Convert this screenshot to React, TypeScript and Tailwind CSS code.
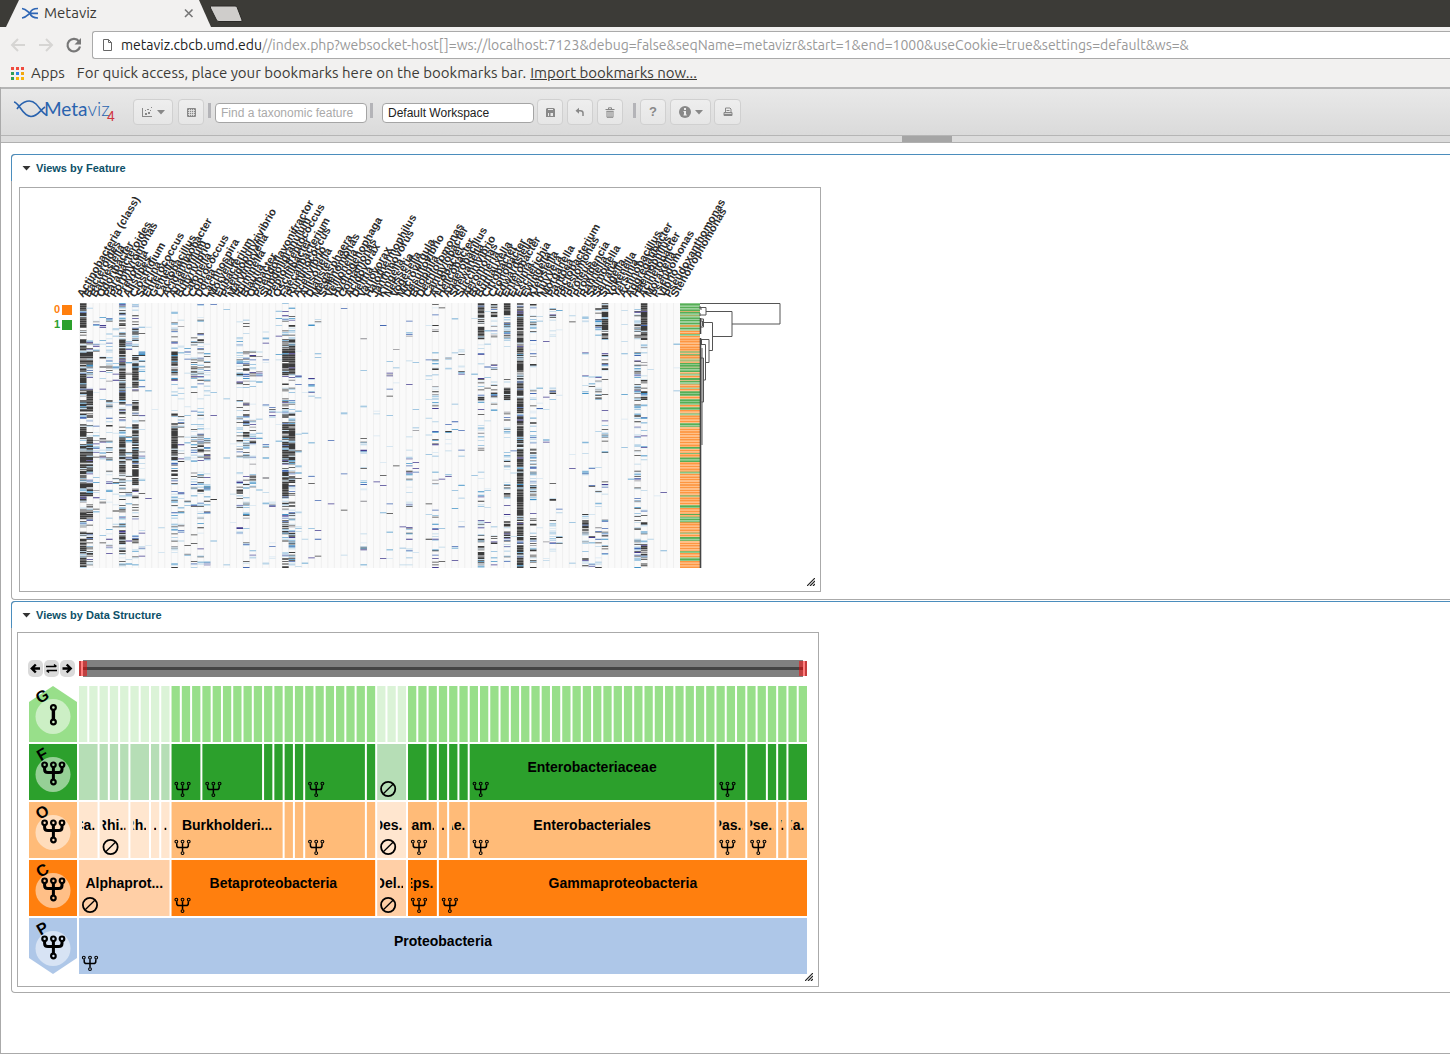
import React from "react";

const GENERA = [
  "Actinobacteria (class)", "Bacteroides", "Barnesiella", "Odoribacter", "Parabacteroides",
  "Porphyromonas", "Prevotella", "Alistipes", "Clostridium", "Sarcina",
  "Enterococcus", "Gemella", "Lactobacillus", "Acidaminobacter", "Anaerofilum",
  "Butyrivibrio", "Catonella", "Coprococcus", "Dorea", "Lachnospira",
  "Moryella", "Eubacterium", "Pseudobutyrivibrio", "Marvinbryella", "Ruminella",
  "Blautia", "Oribacter", "Pseudoflavonifractor", "Subdoligranulum", "Peptostreptococcus",
  "Oscillibacter", "Faecalibacterium", "Ruminococcus", "Acetivibrio", "Allisonella",
  "Dialister", "Megasphaera", "Selenomonas", "Veillonella", "Hydrogenophaga",
  "Comamonas", "Acidovorax", "Delftia", "Variovorax", "Halothermophilus",
  "Janthinovorus", "Kingella", "Neisseria", "Vogesella", "Microvirgula",
  "Desulfovibrio", "Bilophila", "Dechloromonas", "Campylobacter", "Arcobacter",
  "Helicobacter", "Anaerobacillus", "Shewanella", "Succinivibrio", "Aeromonas",
  "Brenneria", "Buttiauxella", "Citrobacter", "Cronobacter", "Edwardsiella",
  "Enterobacter", "Erwinia", "Escherichia", "Ewingella", "Klebsiella",
  "Kluyvera", "Morganella", "Pantoea", "Pectobacterium", "Plesiomonas",
  "Proteus", "Providencia", "Rahnella", "Salmonella", "Serratia",
  "Shigella", "Yokenella", "Yersinia", "Actinobacillus", "Aggregatibacter",
  "Haemophilus", "Acinetobacter", "Moraxella", "Pseudomonas", "Vibrio",
  "Pseudoxanthomonas", "Stenotrophomonas",
];

// Abundance profile of the busy columns: one digit for each of 22 vertical bands.
const PROFILES: Record<number, string> = {
  0: "9989999898989999898999",
  1: "4125984996899979785764",
  2: "0103121100144012110100",
  3: "0102232100144010210110",
  4: "0113543131446133113311",
  5: "0121111010111011111001",
  6: "8659999965599955466945",
  7: "0013211011144012100101",
  8: "4585899698999997661826",
  9: "0121221021123211011110",
  14: "1566982436999564525424",
  15: "0102322213433122123100",
  16: "0101110011111001101010",
  17: "0115573112356144200101",
  18: "1226584324487276243322",
  19: "0102332111236011110001",
  24: "0115673133266145403101",
  25: "1213674158787345444335",
  26: "0002332132566251200211",
  27: "0001221101111011000100",
  28: "0011111011111011101101",
  29: "1001111021111110111111",
  31: "3539994488999699856744",
  32: "5339995468999595755856",
  33: "0101001011101320022011",
  35: "0120011100010011011101",
  36: "0110111100101000101110",
  43: "0011241010134111101311",
  50: "0231222201323321113333",
  54: "2210361333122111323434",
  56: "0000211000111010001101",
  58: "0001230000112001101100",
  61: "9992326834334222215688",
  63: "8840032631100011002624",
  65: "9861045934323244227745",
  67: "9999999999999999999999",
  69: "5522343555356357438858",
  70: "0200000111000011101100",
  72: "3430000300000010105531",
  73: "1110000100000001011101",
  77: "0321102311011232119326",
  78: "0101101000010101010111",
  79: "6530002601100101105213",
  80: "9991325511411122015343",
  85: "2662484645556454545765",
  86: "9993235822233111015678",
};

// Columns holding only a few reads each.
const SPARSE: Record<number, number> = {
  10: 0.03, 11: 0.01, 12: 0.015, 20: 0.015, 22: 0.02, 23: 0.01, 30: 0.03, 34: 0.03,
  38: 0.01, 40: 0.02, 45: 0.02, 46: 0.03, 47: 0.03, 48: 0.01, 49: 0.03, 51: 0.03,
  53: 0.035, 55: 0.02, 57: 0.03, 60: 0.035, 62: 0.05, 66: 0.015, 71: 0.03, 75: 0.03,
  81: 0.005, 83: 0.03, 84: 0.015, 87: 0.01, 88: 0.02, 89: 0.01, 91: 0.01,
};

const HEAT_COLORS = ["#3c3c3c", "#443c8f", "#4468b2", "#4292c6", "#86b8da", "#b9d5e8", "#d6e6f1", "#8d8d93"];
const ROWS = 300;
const ROW_H = 265 / ROWS;
const COL_W = 600 / 92;

function makeRandom(seed: number) {
  let s = seed;
  return () => {
    s = (s * 1664525 + 1013904223) % 4294967296;
    return s / 4294967296;
  };
}

function buildHeat() {
  const rnd = makeRandom(77);
  const paths: string[] = HEAT_COLORS.map(() => "");
  for (let c = 0; c < 92; c++) {
    const profile = PROFILES[c];
    const x = (80 + c * COL_W).toFixed(2);
    let previous = false;
    for (let r = 0; r < ROWS; r++) {
      const d = profile ? Number(profile[Math.floor((r * 22) / ROWS)]) / 10 : SPARSE[c] || 0;
      const base = d >= 0.9 ? 0.95 : d * 0.74;
      const p = profile && d > 0 && d < 0.9 ? (previous ? base + (1 - base) * 0.25 : base * 0.85) : base;
      const hit = rnd() < p;
      const t = rnd();
      previous = hit;
      if (!hit) continue;
      const dark = d >= 0.9 ? 0.86 : d * 0.62 + 0.04;
      let k = 0;
      if (t > dark) {
        const u = (t - dark) / (1 - dark);
        k = u < 0.1 ? 1 : u < 0.2 ? 2 : u < 0.32 ? 3 : u < 0.56 ? 4 : u < 0.78 ? 5 : u < 0.94 ? 6 : 7;
      }
      paths[k] += `M${x} ${(303 + r * ROW_H).toFixed(2)}h6.5v0.8h-6.5z`;
    }
  }
  return paths;
}

const GROUP_BANDS = "7750471743134212342555";

function buildGroups() {
  const rnd = makeRandom(9);
  const colors = ["#fd9641", "#ffb473", "#56ae56", "#8cc98c"];
  const paths = ["", "", "", ""];
  let green = true;
  for (let r = 0; r < ROWS; r++) {
    const g = Number(GROUP_BANDS[Math.floor((r * 22) / ROWS)]) / 10;
    if (rnd() < 0.55) green = rnd() < g;
    const k = (green ? 2 : 0) + (r % 3 === 0 ? 1 : 0);
    paths[k] += `M680 ${(303 + r * ROW_H).toFixed(2)}h20v0.95h-20z`;
  }
  return paths.map((d, i) => ({ d, fill: colors[i] }));
}

const HEAT = buildHeat();
const GROUPS = buildGroups();

function Grip() {
  return (
    <svg className="absolute right-[5px] bottom-[5px]" width="8" height="8" viewBox="0 0 8 8" aria-hidden="true">
      <path d="M0 8L8 0M3 8L8 3M6 8L8 6" stroke="#222" strokeWidth="1.2" fill="none" />
    </svg>
  );
}

function Heatmap() {
  return (
    <svg className="block" width="800" height="403" viewBox="20 188 800 403" role="img" aria-label="Feature heatmap">
      <g className="font-['Liberation_Sans',sans-serif] text-[11px] font-bold">
        <text x="54" y="313" fill="#ff7f0e">0</text>
        <text x="54" y="328" fill="#2ca02c">1</text>
      </g>
      <rect x="62" y="305" width="10" height="10" fill="#ff7f0e" />
      <rect x="62" y="320" width="10" height="10" fill="#2ca02c" />
      <g className="font-['Liberation_Sans',sans-serif] text-[11px] font-bold" fill="#2b2b2b">
        {GENERA.map((name, i) => (
          <text key={name} transform={`translate(${(83 + i * COL_W).toFixed(1)} 298) rotate(-60)`}>{name}</text>
        ))}
      </g>
      <rect x="80" y="303" width="600" height="265" fill="#fafafa" />
      <path d={GENERA.map((_, i) => `M${(80 + i * COL_W).toFixed(2)} 303v265`).join("")} stroke="#efefef" strokeWidth="1" />
      {HEAT.map((d, i) => <path key={HEAT_COLORS[i]} d={d} fill={HEAT_COLORS[i]} />)}
      {GROUPS.map((g) => <path key={g.fill} d={g.d} fill={g.fill} />)}
      <g stroke="#555" fill="none" strokeWidth="1">
        <path d="M700 303.5H780V324H732M706 311.5H732V336.5H712.5M704 322.5H712.5V350.5H709M700 339.5H709V362.5H705.5M700 344.5H705.5V380H703.5M701 358H703.5V402H701.5" />
        <path d="M700 307.5H706V315H700M700 306V309H702M700 313V316M700 319H703.5V327H701M700 321H702.5V326M701.5 340V344M702 348V445" />
        <path d="M700.5 318V334M700.5 338V568" strokeWidth="1.6" stroke="#444" />
      </g>
    </svg>
  );
}

function ForkIcon({ x, y, heavy }: { x: number; y: number; heavy?: boolean }) {
  return heavy ? (
    <g transform={`translate(${x} ${y})`} fill="none" stroke="#000" strokeWidth="2.2">
      <path strokeWidth="3" d="M-8.4-6.5V-4.5Q-8.4-1.5-5-1.5H5.6Q9-1.5 9-4.5V-6.5M.4-6.5V6" />
      <circle cx="-8.4" cy="-9.2" r="2.3" /><circle cx=".4" cy="-9.2" r="2.3" /><circle cx="9" cy="-9.2" r="2.3" />
      <circle cx=".4" cy="8" r="2.3" />
    </g>
  ) : (
    <g transform={`translate(${x} ${y})`} fill="none" stroke="#000" strokeWidth="1.1">
      <path strokeWidth="1.5" d="M-5.8-3.8V-1.8Q-5.8.6-3.6.6H3.6Q5.8.6 5.8-1.8V-3.8M0-3.8V4.6" />
      <circle cx="-6.2" cy="-5.4" r="1.4" /><circle cx="0" cy="-5.4" r="1.4" /><circle cx="6.2" cy="-5.4" r="1.4" />
      <circle cx="0" cy="6.1" r="1.4" />
    </g>
  );
}

type Cell = { from: number; to: number; faded?: boolean; label?: string; icon?: "fork" | "none" };

const c = (from: number, to: number, label?: string, icon?: Cell["icon"], faded?: boolean): Cell => ({ from, to, label, icon, faded });

const LEVELS: { code: string; y: number; fill: string; fade: string; cells: Cell[] }[] = [
  {
    code: "G", y: 686, fill: "#98df8a", fade: "#dbf3d7",
    cells: Array.from({ length: 71 }, (_, i) => c(i, i + 1, undefined, undefined, i < 9 || (i > 28 && i < 32))),
  },
  {
    code: "F", y: 744, fill: "#2ca02c", fade: "#b6deb6",
    cells: [
      c(0, 2, undefined, undefined, true), c(2, 3, undefined, undefined, true), c(3, 4, undefined, undefined, true),
      c(4, 5, undefined, undefined, true), c(5, 7, undefined, undefined, true), c(7, 8, undefined, undefined, true),
      c(8, 9, undefined, undefined, true), c(9, 12, undefined, "fork"), c(12, 18, undefined, "fork"), c(18, 19),
      c(19, 20), c(20, 21), c(21, 22), c(22, 28, undefined, "fork"), c(28, 29), c(29, 32, undefined, "none", true),
      c(32, 34), c(34, 35), c(35, 36), c(36, 37), c(37, 38), c(38, 62, "Enterobacteriaceae", "fork"),
      c(62, 65, undefined, "fork"), c(65, 67), c(67, 68), c(68, 69), c(69, 71),
    ],
  },
  {
    code: "O", y: 802, fill: "#ffbb78", fade: "#ffe6cf",
    cells: [
      c(0, 2, "Ca...", undefined, true), c(2, 5, "Rhi...", "none", true), c(5, 7, "Rh...", undefined, true),
      c(7, 8, ".", undefined, true), c(8, 9, ".", undefined, true), c(9, 20, "Burkholderi...", "fork"),
      c(20, 21), c(21, 22), c(22, 28, undefined, "fork"), c(28, 29), c(29, 32, "Des...", "none", true),
      c(32, 35, "Cam...", "fork"), c(35, 36, "."), c(36, 38, "Ae..."), c(38, 62, "Enterobacteriales", "fork"),
      c(62, 65, "Pas...", "fork"), c(65, 68, "Pse...", "fork"), c(68, 69, "V..."), c(69, 71, "Xa..."),
    ],
  },
  {
    code: "C", y: 860, fill: "#ff7f0e", fade: "#ffcfa6",
    cells: [
      c(0, 9, "Alphaprot...", "none", true), c(9, 29, "Betaproteobacteria", "fork"), c(29, 32, "Del...", "none", true),
      c(32, 35, "Eps...", "fork"), c(35, 71, "Gammaproteobacteria", "fork"),
    ],
  },
  { code: "P", y: 918, fill: "#aec7e8", fade: "#dfe8f6", cells: [c(0, 71, "Proteobacteria", "fork")] },
];

const UNIT = 730 / 71;

function Icicle() {
  return (
    <svg className="mt-[9px] block" width="790" height="300" viewBox="28 686 790 300" role="img" aria-label="Taxonomy levels">
      {LEVELS.map((level) => {
        const y = level.y;
        const shape =
          level.code === "G" ? `M29 ${y + 16}L53 ${y}L77 ${y + 16}V${y + 56}H29z`
          : level.code === "P" ? `M29 ${y}H77V${y + 40}L53 ${y + 56}L29 ${y + 40}z`
          : `M29 ${y}H77V${y + 56}H29z`;
        return (
          <g key={level.code}>
            <path d={shape} fill={level.fill} />
            <circle cx="53" cy={y + 30.5} r="17.5" fill="#fff" fillOpacity="0.5" />
            {level.code === "G" ? (
              <g fill="none" stroke="#000" strokeWidth="2.2">
                <circle cx="53.4" cy={y + 21.5} r="2.4" /><circle cx="53.4" cy={y + 36} r="2.4" />
                <path strokeWidth="3.4" d={`M53.4 ${y + 24}V${y + 34}`} />
              </g>
            ) : <ForkIcon x={53} y={y + 30} heavy />}
            <text
              className="font-['Liberation_Sans',sans-serif] text-[16px] font-bold"
              textAnchor="middle"
              transform={`translate(45 ${y + 15}) rotate(-30)`}
            >
              {level.code}
            </text>
            {level.cells.map((cell) => {
              const x = 79 + cell.from * UNIT;
              const w = (cell.to - cell.from) * UNIT - 2;
              const clip = `clip-${level.code}-${cell.from}`;
              return (
                <g key={cell.from}>
                  <rect x={x} y={y} width={w} height="56" fill={cell.faded ? level.fade : level.fill} />
                  {cell.label && (
                    <>
                      <clipPath id={clip}><rect x={x + 3} y={y} width={Math.max(w - 6, 1)} height="56" /></clipPath>
                      <g clipPath={`url(#${clip})`}>
                        <text
                          className="font-['Liberation_Sans',sans-serif] text-[14px] font-bold"
                          x={x + w / 2}
                          y={y + 28}
                          textAnchor="middle"
                        >
                          {cell.label}
                        </text>
                      </g>
                    </>
                  )}
                  {cell.icon === "fork" && <ForkIcon x={x + 11} y={y + 45} />}
                  {cell.icon === "none" && (
                    <g fill="none" stroke="#000" strokeWidth="1.8">
                      <circle cx={x + 11} cy={y + 45} r="7.1" />
                      <path strokeWidth="1.3" d={`M${x + 6.2} ${y + 49.8}L${x + 15.8} ${y + 40.2}`} />
                    </g>
                  )}
                </g>
              );
            })}
          </g>
        );
      })}
    </svg>
  );
}

const NAV = [
  { label: "Move left", d: "M12 8.5H4M7.8 4.5L3.8 8.5L7.8 12.5", w: 2.4 },
  { label: "Swap", d: "M2 6.5H12M10 4.5L12.5 6.5M13 10.5H3M5 12.5L2.5 10.5", w: 1.5 },
  { label: "Move right", d: "M2.500 8.5H10.500M6.700 4.5L10.700 8.5L6.700 12.5", w: 2.4 },
];

function Navigator() {
  return (
    <div className="flex h-[17px] items-center">
      <div className="flex w-[51px] gap-px">
        {NAV.map((n) => (
          <button key={n.label} type="button" aria-label={n.label} className="h-[17px] w-[15px] rounded-[5px] bg-[#dadada]">
            <svg width="15" height="17" viewBox="0 0 15 17" fill="none" stroke="#000" strokeWidth={n.w}><path d={n.d} /></svg>
          </button>
        ))}
      </div>
      <svg width="728" height="17" viewBox="0 0 728 17" role="img" aria-label="Visible range">
        <rect x="4" width="720" height="17" fill="#808080" />
        <rect x="4" y="7" width="720" height="3" fill="#444" />
        <g fill="#f00" fillOpacity="0.5"><rect y="1" width="8" height="15" /><rect x="720" y="1" width="8" height="15" /></g>
        <path d="M1 1V16M727 1V16" stroke="#c33c3c" strokeWidth="2" />
      </svg>
    </div>
  );
}

function Section({ title, children }: { title: string; children: React.ReactNode }) {
  return (
    <section className="mb-px rounded-l border border-r-0 border-[#aaa]">
      <h2 className="-mt-px -ml-px rounded-tl border-t border-l border-[#4b8dbd]">
        <button type="button" className="flex h-[26px] w-full items-center gap-[5px] pl-2.5 text-[11px] font-bold text-[#0d5068]">
          <svg width="9" height="5" viewBox="0 0 9 5" aria-hidden="true"><path d="M.5 0H8.5L4.5 4.5z" fill="#333" /></svg>
          {title}
        </button>
      </h2>
      {children}
    </section>
  );
}

function ToolButton({ label, className, children }: { label: string; className: string; children: React.ReactNode }) {
  return (
    <button
      type="button"
      aria-label={label}
      className={`flex h-[26px] items-center justify-center gap-1 rounded border border-[#d0d0d0] bg-gradient-to-b from-[#eee] to-[#e6e6e6] text-[#888] ${className}`}
    >
      {children}
    </button>
  );
}

const Caret = () => <svg width="8" height="5" viewBox="0 0 8 5" aria-hidden="true"><path d="M0 0H8L4 4.500z" fill="currentColor" /></svg>;
const Bar = ({ className }: { className: string }) => <span className={`mb-1 h-[15px] w-[3px] self-center bg-[#b4b4b8] ${className}`} />;

function BrowserChrome() {
  return (
    <header className="font-['Ubuntu','Noto_Sans',sans-serif] text-[15px] text-[#3c3b37]">
      <div className="relative h-[27px] bg-[#3c3b37]">
        <svg className="absolute inset-0" width="250" height="27" viewBox="0 0 250 27" aria-hidden="true">
          <path d="M6 27L19 0H199L211 27z" fill="#f2f1f0" />
          <path d="M211.500 6H235Q236.500 6 237 7L242 20Q242.500 21.500 241 21.500H219Q217 21.500 216.500 20L210.500 8Q210 6 211.500 6z" fill="#cfcdcb" stroke="#2a2926" strokeWidth="1" />
          <g stroke="#2f66b5" fill="none">
            <path strokeWidth="1.7" d="M22 8.500C26 9 28 12 30 13.300C31 17 34 18 38 18M22 18C26 17.500 28 15 30 13.300C31 9.500 34 8.500 38 8.500M30 13.300H38" />
          </g>
          <path d="M185 9.500L192.500 17M192.500 9.500L185 17" stroke="#777" strokeWidth="1.6" />
        </svg>
        <div className="relative flex h-[27px] items-center pl-11">Metaviz</div>
      </div>
      <div className="flex h-9 items-center bg-[#f2f1f0] pl-2.5">
        <svg width="72" height="18" viewBox="0 0 72 18" fill="none" aria-hidden="true">
          <path d="M15 9H2M8 3L2 9L8 15" stroke="#d6d5d3" strokeWidth="2" />
          <path d="M29 9H42M36 3L42 9L36 15" stroke="#d6d5d3" strokeWidth="2" />
          <path d="M69 5.500A6.300 6.300 0 1 0 70 10.500" stroke="#777" strokeWidth="2.200" />
          <path d="M71 2V8.500H64.500z" fill="#777" />
        </svg>
        <div className="ml-[10px] flex h-7 flex-1 items-center rounded-l-[3px] border border-r-0 border-[#aaa] bg-white pl-2.5 text-[14px]">
          <svg width="9" height="12" viewBox="0 0 9 12" fill="none" stroke="#666" aria-hidden="true"><path d="M.5.5H5.500L8.500 3.500V11.500H.5zM5.500.5V3.500H8.500" /></svg>
          <span className="ml-[9px] whitespace-nowrap text-[#999]">
            <span className="text-[#222]">metaviz.cbcb.umd.edu</span>//index.php?websocket-host[]=ws://localhost:7123&amp;debug=false&amp;seqName=metavizr&amp;start=1&amp;end=1000&amp;useCookie=true&amp;settings=default&amp;ws=&amp;
          </span>
        </div>
      </div>
      <nav className="flex h-6 items-center bg-[#f2f1f0] pb-1 pl-[11px] whitespace-nowrap" aria-label="Bookmarks">
        <svg width="13" height="13" viewBox="0 0 13 13" aria-hidden="true">
          <path fill="#f04b3e" d="M0 0h3v3H0zM5 0h3v3H5zM10 0h3v3h-3z" />
          <path fill="#2e9e58" d="M0 5h3v3H0z" /><path fill="#2a83ea" d="M5 5h3v3H5z" /><path fill="#f2a60c" d="M10 5h3v3h-3z" />
          <path fill="#2e9e58" d="M0 10h3v3H0z" /><path fill="#f8b50a" d="M5 10h3v3H5zM10 10h3v3h-3z" />
        </svg>
        <span className="ml-[7px]">Apps</span>
        <span className="ml-3">For quick access, place your bookmarks here on the bookmarks bar.</span>
        <a href="#import" className="ml-1 underline">Import bookmarks now...</a>
      </nav>
    </header>
  );
}

function Toolbar() {
  const field = "mt-0.5 h-5 w-[152px] rounded border border-[#a5a5a5] bg-white px-[5px] text-[12px] text-[#222] placeholder:text-[#aaa]";
  return (
    <div className="flex h-[49px] items-center border-t-2 border-b border-[#b5b5b5] bg-gradient-to-b from-[#e9e9e9] to-[#dadada] pl-3">
      <svg width="108" height="30" viewBox="12 97 108 30" role="img" aria-label="Metaviz 4">
        <path d="M13 102C19 103 21 116 30 116.500C37 116.500 39 110 44 107M16 109C22 100 30 99 35 104C39 108 41 113 46 115.500" fill="none" stroke="#2a63ae" strokeWidth="1.600" />
        <text x="43" y="116" fill="#2a63ae" className="font-['Lato',sans-serif] text-[19px]">Meta<tspan className="font-light">viz</tspan></text>
        <text x="106" y="121" fill="#d0343f" className="font-['Liberation_Sans',sans-serif] text-[14px]">4</text>
      </svg>
      <ToolButton label="Plots" className="ml-3 w-10">
        <svg width="12" height="12" viewBox="0 0 12 12" fill="currentColor"><path d="M1 2h1v8h9v1H1zM4 7h2v2H4zM4 4h1v1H4zM7 6h2v2H7zM6 3h2v1H6zM10 1h1v1h-1zM9 4h1v1H9z" /></svg>
        <Caret />
      </ToolButton>
      <ToolButton label="Data" className="ml-[5px] w-[26px]">
        <svg width="9" height="9" viewBox="0 0 9 9"><rect width="9" height="9" rx="1" fill="currentColor" /><path d="M1 2.500H8M1 4.500H8M1 6.500H8M2.500 1V8M4.500 1V8M6.500 1V8" stroke="#e4e4e4" strokeWidth=".8" /></svg>
      </ToolButton>
      <Bar className="ml-[4px]" />
      <input className={`ml-1 ${field}`} placeholder="Find a taxonomic feature" aria-label="Find a taxonomic feature" />
      <Bar className="ml-[3px]" />
      <input className={`ml-[9px] ${field}`} defaultValue="Default Workspace" aria-label="Workspace name" />
      <ToolButton label="Save" className="ml-[3px] w-[26px]">
        <svg width="9" height="9" viewBox="0 0 9 9"><path d="M1 0H7.500L9 1V9H0V1z" fill="currentColor" /><path d="M2 1H7V2H2zM2 5H7V8H2z" fill="#e8e8e8" /><path d="M3 5H4.500V8H3z" fill="currentColor" /></svg>
      </ToolButton>
      <ToolButton label="Undo" className="ml-1 w-[26px]">
        <svg width="10" height="10" viewBox="0 0 10 10"><path d="M2 3.700H5.500Q8 3.700 8 6V9" fill="none" stroke="currentColor" strokeWidth="1.500" /><path d="M.5 3.700L4 .7V6.700z" fill="currentColor" /></svg>
      </ToolButton>
      <ToolButton label="Delete" className="ml-1 w-[26px]">
        <svg width="10" height="11" viewBox="0 0 10 11" fill="none" stroke="currentColor"><path d="M.5 2.500H9.500M3.500 2V.8H6.500V2M2 4.300V10.300H8V4.300M4 4.300V10M6 4.300V10M1.500 4.300H8.500" /></svg>
      </ToolButton>
      <Bar className="ml-[10px]" />
      <ToolButton label="Help" className="ml-1 w-[26px] text-[13px] font-bold">?</ToolButton>
      <ToolButton label="Information" className="ml-1 w-[41px]">
        <svg width="12" height="12" viewBox="0 0 12 12"><circle cx="6" cy="6" r="6" fill="currentColor" /><path d="M5 2h2v2H5zM4.500 5H7v3.500h.8v1H4.500v-1H5V6h-.5z" fill="#eee" /></svg>
        <Caret />
      </ToolButton>
      <ToolButton label="Print" className="ml-[3px] w-[27px]">
        <svg width="10" height="10" viewBox="0 0 10 10" fill="none" stroke="currentColor"><path d="M2.500 5V1H7L8 2V5M1 5.500H9V8.500H1zM3.500 3.500H6.500" /><path d="M1 7.500H9" strokeWidth="1.500" /></svg>
      </ToolButton>
    </div>
  );
}

export default function App() {
  return (
    <div className="flex min-h-screen flex-col bg-white font-['Liberation_Sans',Arial,sans-serif]">
      <BrowserChrome />
      <div className="flex flex-1 flex-col border-b border-l border-[#aaa]">
        <Toolbar />
        <div className="flex h-[7px] border-b border-[#b0b0b0] bg-[#dcdcdc] pl-[901px]">
          <div className="w-[50px] bg-[#a5a5a5]" />
        </div>
        <main className="pt-[11px] pl-2.5">
          <Section title="Views by Feature">
            <div className="relative mt-[6px] mb-[7px] ml-[7px] w-[802px] border border-[#aaa]">
              <Heatmap />
              <Grip />
            </div>
          </Section>
          <Section title="Views by Data Structure">
            <div className="relative mt-1 mb-[5px] ml-[5px] h-[355px] w-[802px] border border-[#aaa] pt-[27px] pl-[10px]">
              <Navigator />
              <Icicle />
              <Grip />
            </div>
          </Section>
        </main>
      </div>
    </div>
  );
}
